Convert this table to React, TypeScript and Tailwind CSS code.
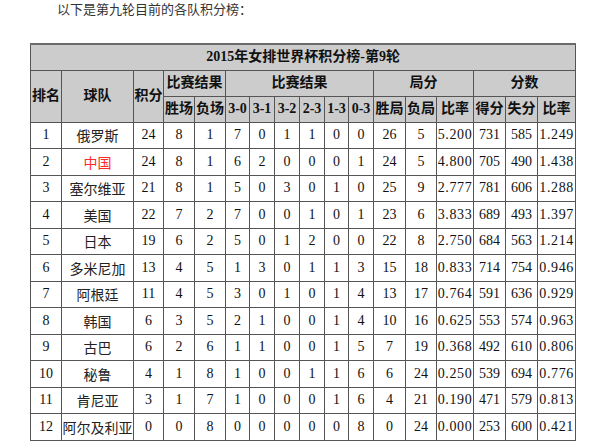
import React from "react";

const widths = [31, 72, 30, 31, 31, 24, 25, 25, 25, 24, 25, 32, 31, 37, 32, 32, 38];

type Row = (string | number)[];
const rows: Row[] = [
  [1, "俄罗斯", 24, 8, 1, 7, 0, 1, 1, 0, 0, 26, 5, "5.200", 731, 585, "1.249"],
  [2, "中国", 24, 8, 1, 6, 2, 0, 0, 0, 1, 24, 5, "4.800", 705, 490, "1.438"],
  [3, "塞尔维亚", 21, 8, 1, 5, 0, 3, 0, 1, 0, 25, 9, "2.777", 781, 606, "1.288"],
  [4, "美国", 22, 7, 2, 7, 0, 0, 1, 0, 1, 23, 6, "3.833", 689, 493, "1.397"],
  [5, "日本", 19, 6, 2, 5, 0, 1, 2, 0, 0, 22, 8, "2.750", 684, 563, "1.214"],
  [6, "多米尼加", 13, 4, 5, 1, 3, 0, 1, 1, 3, 15, 18, "0.833", 714, 754, "0.946"],
  [7, "阿根廷", 11, 4, 5, 3, 0, 1, 0, 1, 4, 13, 17, "0.764", 591, 636, "0.929"],
  [8, "韩国", 6, 3, 5, 2, 1, 0, 0, 1, 4, 10, 16, "0.625", 553, 574, "0.963"],
  [9, "古巴", 6, 2, 6, 1, 1, 0, 0, 1, 5, 7, 19, "0.368", 492, 610, "0.806"],
  [10, "秘鲁", 4, 1, 8, 1, 0, 0, 1, 1, 6, 6, 24, "0.250", 539, 694, "0.776"],
  [11, "肯尼亚", 3, 1, 7, 1, 0, 0, 0, 1, 6, 4, 21, "0.190", 471, 579, "0.813"],
  [12, "阿尔及利亚", 0, 0, 8, 0, 0, 0, 0, 0, 8, 0, 24, "0.000", 253, 600, "0.421"],
];

const hd = "border border-[#555] bg-[#cccccc] font-bold text-[14px] leading-none text-center align-middle p-0 whitespace-nowrap";
const td = "border border-[#555] text-[14px] leading-none text-center align-middle p-0 whitespace-nowrap";

export default function App() {
  return (
    <div
      className="w-[600px] h-[442px] overflow-hidden bg-white text-[#111]"
      style={{ fontFamily: "'Liberation Serif', 'Noto Sans CJK SC', serif" }}
    >
      <p
        className="pl-[57px] pt-[2px] text-[13px] leading-[13px] h-[15px] text-[#333]"
        style={{ fontFamily: "'Noto Sans CJK SC', sans-serif" }}
      >
        以下是第九轮目前的各队积分榜：
      </p>
      <table className="ml-[30px] mt-[28px] border-collapse table-fixed w-[546px] border-t-2 border-t-[#666]">
        <colgroup>
          {widths.map((w, i) => (
            <col key={i} style={{ width: w }} />
          ))}
        </colgroup>
        <thead>
          <tr className="h-[26px]">
            <th colSpan={17} className={hd + " border-t-2 border-t-[#6a6a6a]"}>
              2015年女排世界杯积分榜-第9轮
            </th>
          </tr>
          <tr className="h-[26px]">
            <th rowSpan={2} className={hd}>排名</th>
            <th rowSpan={2} className={hd}>球队</th>
            <th rowSpan={2} className={hd}>积分</th>
            <th colSpan={2} className={hd}>比赛结果</th>
            <th colSpan={6} className={hd}>比赛结果</th>
            <th colSpan={3} className={hd}>局分</th>
            <th colSpan={3} className={hd}>分数</th>
          </tr>
          <tr className="h-[26px]">
            <th className={hd}>胜场</th>
            <th className={hd}>负场</th>
            <th className={hd}>3-0</th>
            <th className={hd}>3-1</th>
            <th className={hd}>3-2</th>
            <th className={hd}>2-3</th>
            <th className={hd}>1-3</th>
            <th className={hd}>0-3</th>
            <th className={hd}>胜局</th>
            <th className={hd}>负局</th>
            <th className={hd}>比率</th>
            <th className={hd}>得分</th>
            <th className={hd}>失分</th>
            <th className={hd}>比率</th>
          </tr>
        </thead>
        <tbody>
          {rows.map((r, ri) => (
            <tr key={ri} className="h-[26.5px]">
              {r.map((c, ci) => (
                <td
                  key={ci}
                  className={
                    td +
                    (ci === 1 ? (r[1] === "中国" ? " text-[#ff2a2a]" : " text-[#222]") : "") +
                    (ci === 13 || ci === 16 ? " tracking-[0.6px]" : "")
                  }
                  style={ci === 1 ? { fontFamily: "'Noto Sans CJK SC', sans-serif" } : undefined}
                >
                  {c}
                </td>
              ))}
            </tr>
          ))}
        </tbody>
      </table>
    </div>
  );
}
